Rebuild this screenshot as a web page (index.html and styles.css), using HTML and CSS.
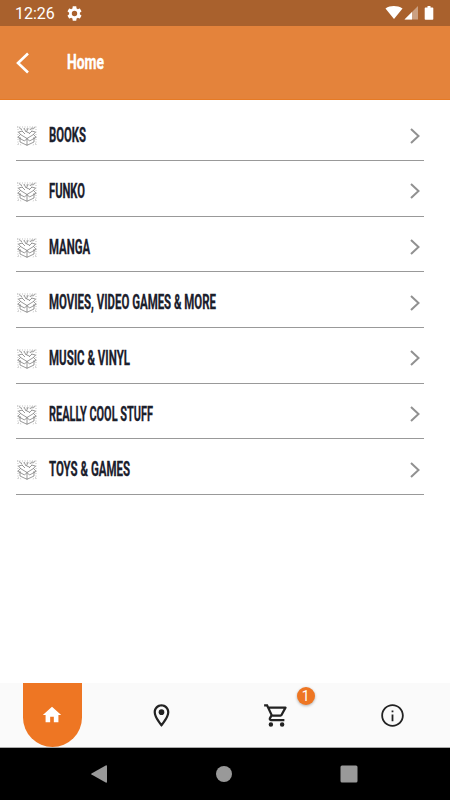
FILE: index.html
```html
<!DOCTYPE html>
<html lang="en">
<head>
    <meta charset="UTF-8">
    <meta name="viewport" content="width=device-width, initial-scale=1.0">
    <title>Home</title>
    <link rel="stylesheet" href="styles.css">
</head>
<body>
    <svg width="0" height="0" class="symbols">
        <symbol id="box" viewBox="0 0 20 20">
            <path d="M3 11V16L10 19.300L17 16V11M10 13V19.300M3.500 8.500L10 12.500L16.500 8.500M3.500 8.500L.8 11.300L7.500 15L10 12.500L12.500 15L19.200 11.300L16.500 8.500L18.500 6L14.500 5M3.500 8.500L1.500 6L5.500 5"/>
            <path d="M2 1.500l3 2.500M7 2l2 4M11 2L9.500 6l3 1M13 4l2-2.500M18 1.500l-3 1.500M5 5l3 3M15 5l-3 3"/>
            <path class="confetti" d="M0 1H20M1 .5V19M19 .5V19M1 17.500L5 19.500M19 17.500L15 19.500M4 3H17"/>
        </symbol>
        <symbol id="chevron" viewBox="0 0 10 16">
            <path d="M1 1L8.500 8L1 15"/>
        </symbol>
    </svg>

    <div class="statusBar">
        <span class="time">12:26</span>
        <svg class="gear" viewBox="2 2 20 20"><path d="M19.140 12.940c.040-.3.060-.610.060-.940 0-.320-.020-.640-.070-.940l2.030-1.580c.180-.140.230-.410.120-.610l-1.920-3.320c-.120-.220-.370-.290-.590-.220l-2.390.960c-.5-.380-1.030-.7-1.620-.940l-.360-2.540c-.040-.240-.240-.410-.480-.410h-3.840c-.240 0-.430.170-.470.410l-.360 2.540c-.590.240-1.130.570-1.620.940l-2.390-.960c-.220-.080-.470 0-.590.220L2.740 8.870c-.120.210-.080.470.120.610l2.030 1.580c-.050.3-.090.630-.090.940s.020.640.070.940l-2.030 1.580c-.180.140-.230.410-.120.610l1.920 3.320c.120.220.370.290.590.220l2.390-.960c.5.380 1.030.7 1.620.940l.360 2.540c.050.240.240.410.480.410h3.840c.240 0 .440-.170.470-.410l.360-2.540c.590-.240 1.130-.560 1.620-.940l2.390.960c.220.080.470 0 .590-.220l1.920-3.320c.120-.220.070-.470-.120-.610l-2.010-1.580zM12 15.600a3.600 3.600 0 1 1 0-7.200 3.600 3.600 0 0 1 0 7.200z"/></svg>
        <svg class="signals" viewBox="0 0 50 16">
            <path d="M.5 3.500C5.500.3 12 .3 17.500 3.500L9 14z"/>
            <path d="M33 1V14.500H19.500z" opacity=".4"/>
            <path d="M27 7V14.500H19.500z"/>
            <path d="M42.500 1h3v1.500h2q.8 0 .8.800v10.700q0 .8-.8.800h-7q-.8 0-.8-.8v-10.700q0-.8.800-.8h2z"/>
        </svg>
    </div>

    <header>
        <svg class="back" viewBox="0 0 14 22"><path d="M12 1.500L2 11L12 20.500"/></svg>
        <svg class="title"><text x="0" y="21" textLength="37" lengthAdjust="spacingAndGlyphs">Home</text></svg>
    </header>

    <main>
        <div class="item">
            <svg class="box"><use href="#box"/></svg>
            <svg class="label"><text x="0" y="21" textLength="37" lengthAdjust="spacingAndGlyphs">BOOKS</text></svg>
            <svg class="chevron"><use href="#chevron"/></svg>
        </div>
        <div class="item">
            <svg class="box"><use href="#box"/></svg>
            <svg class="label"><text x="0" y="21" textLength="36" lengthAdjust="spacingAndGlyphs">FUNKO</text></svg>
            <svg class="chevron"><use href="#chevron"/></svg>
        </div>
        <div class="item">
            <svg class="box"><use href="#box"/></svg>
            <svg class="label"><text x="0" y="21" textLength="41" lengthAdjust="spacingAndGlyphs">MANGA</text></svg>
            <svg class="chevron"><use href="#chevron"/></svg>
        </div>
        <div class="item">
            <svg class="box"><use href="#box"/></svg>
            <svg class="label"><text x="0" y="21" textLength="167" lengthAdjust="spacingAndGlyphs">MOVIES, VIDEO GAMES &amp; MORE</text></svg>
            <svg class="chevron"><use href="#chevron"/></svg>
        </div>
        <div class="item">
            <svg class="box"><use href="#box"/></svg>
            <svg class="label"><text x="0" y="21" textLength="81" lengthAdjust="spacingAndGlyphs">MUSIC &amp; VINYL</text></svg>
            <svg class="chevron"><use href="#chevron"/></svg>
        </div>
        <div class="item">
            <svg class="box"><use href="#box"/></svg>
            <svg class="label"><text x="0" y="21" textLength="104" lengthAdjust="spacingAndGlyphs">REALLY COOL STUFF</text></svg>
            <svg class="chevron"><use href="#chevron"/></svg>
        </div>
        <div class="item">
            <svg class="box"><use href="#box"/></svg>
            <svg class="label"><text x="0" y="21" textLength="81" lengthAdjust="spacingAndGlyphs">TOYS &amp; GAMES</text></svg>
            <svg class="chevron"><use href="#chevron"/></svg>
        </div>
    </main>

    <nav class="tabs">
        <a class="tab active"><svg viewBox="0 0 24 24"><path d="M10 20v-6h4v6h5v-8h3L12 3 2 12h3v8z"/></svg></a>
        <a class="tab"><svg viewBox="0 0 24 24"><path d="M12 2C8.130 2 5 5.130 5 9c0 5.250 7 13 7 13s7-7.750 7-13c0-3.870-3.130-7-7-7zM7 9c0-2.760 2.240-5 5-5s5 2.240 5 5c0 2.880-2.880 7.190-5 9.880C9.920 16.210 7 11.850 7 9z"/><circle cx="12" cy="9" r="2.500"/></svg></a>
        <a class="tab">
            <svg viewBox="0 0 24 24"><path d="M15.550 13c.750 0 1.410-.410 1.750-1.030l3.580-6.490A.996.996 0 0 0 20.010 4H5.210l-.940-2H1v2h2l3.600 7.590-1.350 2.440C4.520 15.370 5.480 17 7 17h12v-2H7l1.100-2h7.450zM6.160 6h12.150l-2.760 5H8.530L6.160 6zM7 18a2 2 0 1 0 0 4 2 2 0 0 0 0-4zm10 0a2 2 0 1 0 0 4 2 2 0 0 0 0-4z"/></svg>
            <span class="badge">1</span>
        </a>
        <a class="tab"><svg viewBox="0 0 24 24"><path d="M11.200 7.500h1.600v1.700h-1.600zm0 3.700h1.600v5.800h-1.600zM12 2C6.480 2 2 6.480 2 12s4.480 10 10 10 10-4.480 10-10S17.520 2 12 2zm0 18.400c-4.640 0-8.400-3.760-8.400-8.400s3.760-8.400 8.400-8.400 8.400 3.760 8.400 8.400-3.760 8.400-8.400 8.400z"/></svg></a>
    </nav>

    <div class="systemBar">
        <svg viewBox="0 0 18 18"><path d="M15.700 0.500Q17 0 17 1.300V16.700Q17 18 15.700 17.500L1.500 9.600Q.7 9 1.500 8.400z"/></svg>
        <svg viewBox="0 0 18 18"><circle cx="9" cy="9" r="8"/></svg>
        <svg viewBox="0 0 18 18"><rect x=".5" y=".5" width="17" height="17" rx="1.500"/></svg>
    </div>
</body>
</html>
```
FILE: styles.css
```css
*{
    margin: 0;
    padding: 0;
    box-sizing: border-box;
}
body{
    width: 450px;
    height: 800px;
    display: flex;
    flex-direction: column;
    background-color: #fff;
    font-family: Roboto, "Liberation Sans", sans-serif;
    overflow: hidden;
}
svg{
    display: block;
    flex: none;
}
.symbols{
    position: absolute;
}
.statusBar{
    height: 26px;
    padding: 0 15px 0 15px;
    display: flex;
    align-items: center;
    background-color: #a9612d;
    color: #fff;
    fill: #fff;
}
.time{
    width: 52px;
    font-size: 16px;
    line-height: 26px;
    padding-top: 1px;
}
.gear{
    width: 15px;
    height: 15px;
}
.signals{
    width: 50px;
    height: 16px;
    margin-left: auto;
}
header{
    height: 74px;
    padding: 0 16px;
    display: flex;
    align-items: center;
    background-color: #e4833b;
    border-bottom: 1px solid #e67a24;
}
.back{
    width: 14px;
    height: 22px;
    margin-right: 36.500px;
    fill: none;
    stroke: #fff;
    stroke-width: 2.6;
}
.title{
    width: 60px;
    height: 28px;
    margin-top: -2px;
    fill: #fff;
    stroke: #fff;
    stroke-width: 0.4;
    font-size: 21px;
    font-weight: bold;
}
main{
    flex: 1;
    padding: 5.300px 26px 0 16px;
}
.item{
    height: 55.700px;
    padding: 6px 4px 0 0;
    display: flex;
    align-items: center;
    border-bottom: 1px solid #999;
}
.box{
    width: 20px;
    height: 20px;
    margin: 1px 12.500px 0 0.500px;
    fill: none;
    stroke: #555;
    stroke-width: 0.6;
}
.confetti{
    stroke: #999;
    stroke-dasharray: 1 1.5;
}
.label{
    width: 200px;
    height: 28px;
    margin-top: -1px;
    overflow: visible;
    fill: #1b202c;
    stroke: #1b202c;
    stroke-width: 0.3;
    font-size: 20px;
    font-weight: bold;
}
.chevron{
    width: 10px;
    height: 16px;
    margin-left: auto;
    fill: none;
    stroke: #919191;
    stroke-width: 2;
}
.tabs{
    height: 65px;
    display: flex;
    background-color: #fafafa;
    border-bottom: 1px solid #aaa;
}
.tab{
    flex: 1;
    height: 64px;
    display: flex;
    align-items: center;
    justify-content: center;
    position: relative;
    fill: #222;
}
.tab svg{
    width: 27px;
    height: 27px;
}
.tab.active{
    flex: none;
    width: 59px;
    margin: 0 22.500px 0 22.500px;
    border-radius: 0 0 30px 30px;
    background-color: #ee7623;
    fill: #fff;
}
.tab.active svg{
    width: 22px;
    height: 22px;
}
.badge{
    width: 18px;
    height: 18px;
    position: absolute;
    top: 4px;
    right: 20px;
    border-radius: 50%;
    background-color: #ee7623;
    box-shadow: 0 1px 3px rgba(0,0,0,0.3);
    color: #fff;
    font-size: 14px;
    line-height: 18px;
    text-align: center;
}
.systemBar{
    height: 52px;
    padding: 0 92px 0 90px;
    display: flex;
    align-items: center;
    justify-content: space-between;
    background-color: #000;
    fill: #999;
}
.systemBar svg{
    width: 18px;
    height: 18px;
}
```
